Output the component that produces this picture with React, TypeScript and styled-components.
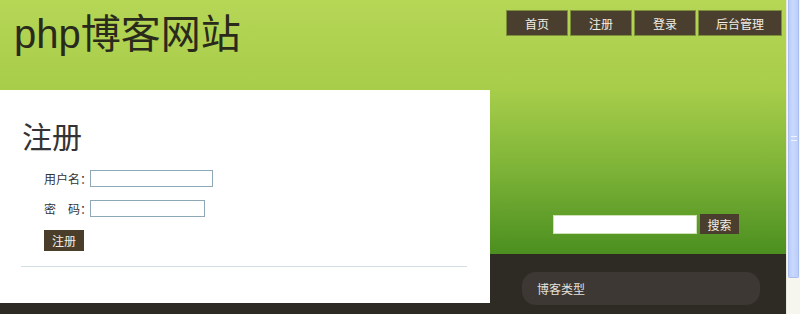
import React from "react";
import styled, { createGlobalStyle } from "styled-components";

const Global = createGlobalStyle`
  html, body { margin: 0; padding: 0; }
  body { font-family: "Noto Sans CJK SC", "Liberation Sans", sans-serif; overflow: hidden; }
`;

const cjk = `"Liberation Sans", "Noto Sans CJK SC", sans-serif`;

const Window = styled.div`
  display: flex;
  width: 800px;
  height: 314px;
  overflow: hidden;
`;

const Page = styled.div`
  flex: 0 0 786px;
  height: 314px;
  background: linear-gradient(
    to bottom,
    #b6d656 0px,
    #a7cd4a 90px,
    #7db337 170px,
    #4b8f20 254px,
    #2e2a24 254px,
    #2e2a24 100%
  );
  display: flex;
  flex-direction: column;
`;

const Header = styled.header`
  height: 90px;
  display: flex;
  justify-content: space-between;
  align-items: flex-start;
`;

const Logo = styled.h1`
  margin: 12px 0 0 14px;
  font-family: ${cjk};
  font-weight: normal;
  font-size: 40px;
  line-height: 44px;
  color: #2a2a1c;
`;

const Nav = styled.nav`
  display: flex;
  gap: 2px;
  margin: 10px 4px 0 0;
`;

const NavItem = styled.a<{ $w: number }>`
  width: ${(p) => p.$w}px;
  height: 26px;
  box-sizing: border-box;
  background: #4a3f2f;
  border: 1px solid #7d8f3a;
  color: #f2efe6;
  font-family: ${cjk};
  font-size: 12px;
  display: flex;
  align-items: center;
  justify-content: center;
  text-decoration: none;
`;

const Main = styled.div`
  display: flex;
  align-items: flex-start;
`;

const Content = styled.section`
  width: 490px;
  height: 213px;
  background: #fff;
  box-sizing: border-box;
  padding: 30px 23px 0 21px;
`;

const Heading = styled.h2`
  margin: 0 0 0 1px;
  font-family: ${cjk};
  font-weight: normal;
  font-size: 30px;
  line-height: 36px;
  color: #333;
`;

const Form = styled.form`
  margin: 14px 0 0 23px;
  display: flex;
  flex-direction: column;
  gap: 13px;
`;

const Row = styled.div`
  display: flex;
  align-items: center;
  height: 17px;
`;

const ButtonRow = styled.div`
  display: flex;
  height: 21px;
`;

const Label = styled.label`
  width: 46px;
  font-family: ${cjk};
  font-size: 12px;
  color: #333;
  white-space: pre;
`;

const Input = styled.input<{ $w: number }>`
  width: ${(p) => p.$w}px;
  height: 17px;
  box-sizing: border-box;
  border: 1px solid #8ea8b8;
  padding: 0 2px;
  margin: 0;
  background: #fff;
`;

const Submit = styled.button`
  width: 40px;
  height: 21px;
  border: none;
  background: #4a3e2b;
  color: #f3efe5;
  font-family: ${cjk};
  font-size: 12px;
  padding: 0;
  cursor: pointer;
`;

const Divider = styled.hr`
  margin: 15px 0 0 0;
  border: none;
  border-top: 1px solid #d3dfe3;
`;

const Sidebar = styled.aside`
  flex: 1;
  display: flex;
  flex-direction: column;
  padding-top: 124px;
`;

const SearchRow = styled.div`
  display: flex;
  align-items: center;
  gap: 3px;
  margin-left: 63px;
`;

const SearchInput = styled.input`
  width: 144px;
  height: 19px;
  box-sizing: border-box;
  border: 1px solid #cfe2b8;
  background: #fff;
  margin: 0;
  padding: 0 2px;
`;

const SearchButton = styled.button`
  width: 39px;
  height: 20px;
  border: none;
  background: #4a3f2f;
  color: #f2efe6;
  font-family: ${cjk};
  font-size: 12px;
  padding: 0;
`;

const CategoryBox = styled.div`
  margin: 38px 0 0 32px;
  width: 238px;
  height: 33px;
  box-sizing: border-box;
  background: #3d3834;
  border-radius: 14px;
  padding-left: 15px;
  display: flex;
  align-items: center;
  color: #e4e0da;
  font-family: ${cjk};
  font-size: 12px;
`;

const Scrollbar = styled.div`
  flex: 0 0 14px;
  height: 314px;
  background: #f6f5ee;
  border-left: 1px solid #e8e8e0;
  box-sizing: border-box;
  display: flex;
  flex-direction: column;
`;

const Thumb = styled.div`
  height: 278px;
  margin: 0 1px;
  background: linear-gradient(to right, #b9ccf8, #c9d8fd 40%, #bccff9);
  border: 1px solid #a9bdf0;
  border-top: none;
  border-radius: 0 0 2px 2px;
  box-sizing: border-box;
  display: flex;
  align-items: center;
  justify-content: center;
`;

const Grip = styled.div`
  width: 6px;
  height: 3px;
  border-top: 1px solid #eef3ff;
  border-bottom: 1px solid #eef3ff;
`;

export default function App() {
  return (
    <>
      <Global />
      <Window>
        <Page>
          <Header>
            <Logo>php博客网站</Logo>
            <Nav>
              <NavItem $w={62} href="#">首页</NavItem>
              <NavItem $w={62} href="#">注册</NavItem>
              <NavItem $w={62} href="#">登录</NavItem>
              <NavItem $w={84} href="#">后台管理</NavItem>
            </Nav>
          </Header>
          <Main>
            <Content>
              <Heading>注册</Heading>
              <Form onSubmit={(e) => e.preventDefault()}>
                <Row>
                  <Label>用户名：</Label>
                  <Input $w={123} type="text" />
                </Row>
                <Row>
                  <Label>{"密　码："}</Label>
                  <Input $w={115} type="password" />
                </Row>
                <ButtonRow>
                  <Submit type="submit">注册</Submit>
                </ButtonRow>
              </Form>
              <Divider />
            </Content>
            <Sidebar>
              <SearchRow>
                <SearchInput type="text" />
                <SearchButton>搜索</SearchButton>
              </SearchRow>
              <CategoryBox>博客类型</CategoryBox>
            </Sidebar>
          </Main>
        </Page>
        <Scrollbar>
          <Thumb>
            <Grip />
          </Thumb>
        </Scrollbar>
      </Window>
    </>
  );
}
